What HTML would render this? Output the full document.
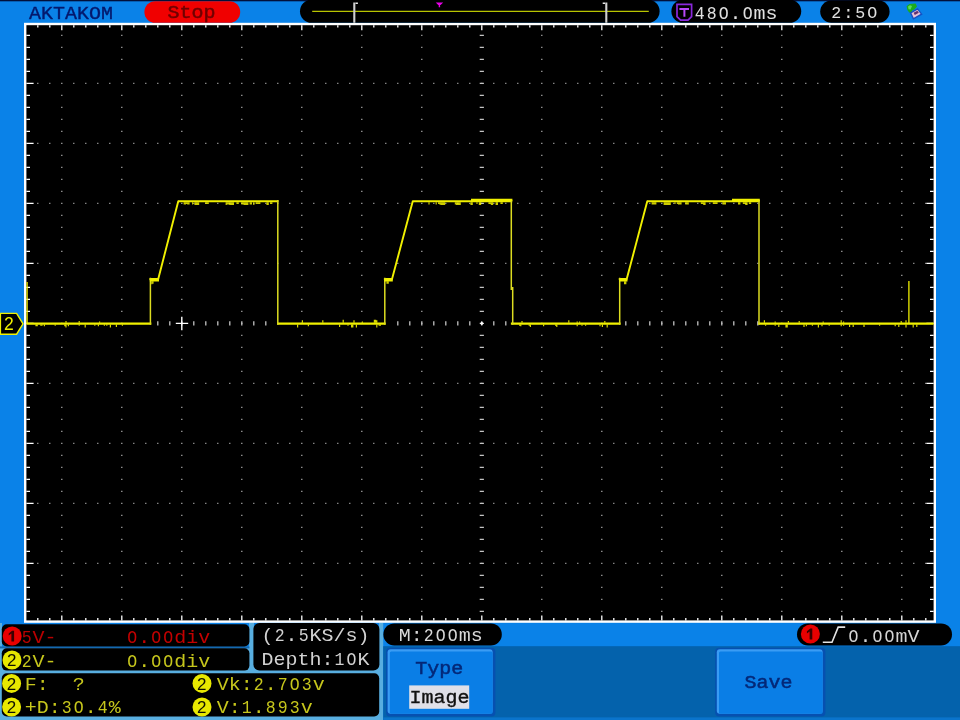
<!DOCTYPE html>
<html><head><meta charset="utf-8"><title>scope</title>
<style>html,body{margin:0;padding:0;background:#0a82e8;overflow:hidden}body{width:960px;height:720px;position:relative;font-family:"Liberation Mono",monospace}</style>
</head><body>
<svg width="960" height="720" viewBox="0 0 960 720" style="position:absolute;left:0;top:0;display:block;filter:blur(0.45px)">
<defs><style>text{font-family:"Liberation Mono",monospace;font-size:18px;white-space:pre}.s{font-family:"Liberation Sans",sans-serif}</style></defs>
<rect x="0" y="0" width="960" height="720" fill="#0a82e8"/>
<rect x="0" y="0" width="960" height="1.3" fill="#02103a"/>
<rect x="24.0" y="22.8" width="912.0" height="600.0" fill="#fff"/>
<rect x="26.4" y="25.2" width="907.2" height="595.1999999999999" fill="#000"/>
<path d="M61.8 34.8V616.4M121.8 34.8V616.4M181.8 34.8V616.4M241.8 34.8V616.4M301.8 34.8V616.4M361.8 34.8V616.4M421.8 34.8V616.4M541.8 34.8V616.4M601.8 34.8V616.4M661.8 34.8V616.4M721.8 34.8V616.4M781.8 34.8V616.4M841.8 34.8V616.4M901.8 34.8V616.4M37.2 83.4H929.6M37.2 143.4H929.6M37.2 203.4H929.6M37.2 263.4H929.6M37.2 383.4H929.6M37.2 443.4H929.6M37.2 503.4H929.6M37.2 563.4H929.6" stroke="#a4a4a4" stroke-width="1.3" stroke-dasharray="1.2 10.8" fill="none"/>
<path d="M479.7 35.4h4.2M479.7 47.4h4.2M479.7 59.4h4.2M479.7 71.4h4.2M479.7 83.4h4.2M479.7 95.4h4.2M479.7 107.4h4.2M479.7 119.4h4.2M479.7 131.4h4.2M479.7 143.4h4.2M479.7 155.4h4.2M479.7 167.4h4.2M479.7 179.4h4.2M479.7 191.4h4.2M479.7 203.4h4.2M479.7 215.4h4.2M479.7 227.4h4.2M479.7 239.4h4.2M479.7 251.4h4.2M479.7 263.4h4.2M479.7 275.4h4.2M479.7 287.4h4.2M479.7 299.4h4.2M479.7 311.4h4.2M479.7 323.4h4.2M479.7 335.4h4.2M479.7 347.4h4.2M479.7 359.4h4.2M479.7 371.4h4.2M479.7 383.4h4.2M479.7 395.4h4.2M479.7 407.4h4.2M479.7 419.4h4.2M479.7 431.4h4.2M479.7 443.4h4.2M479.7 455.4h4.2M479.7 467.4h4.2M479.7 479.4h4.2M479.7 491.4h4.2M479.7 503.4h4.2M479.7 515.4h4.2M479.7 527.4h4.2M479.7 539.4h4.2M479.7 551.4h4.2M479.7 563.4h4.2M479.7 575.4h4.2M479.7 587.4h4.2M479.7 599.4h4.2M479.7 611.4h4.2M157.8 321.3v4.2M169.8 321.3v4.2M181.8 321.3v4.2M193.8 321.3v4.2M205.8 321.3v4.2M217.8 321.3v4.2M229.8 321.3v4.2M241.8 321.3v4.2M253.8 321.3v4.2M265.8 321.3v4.2M397.8 321.3v4.2M409.8 321.3v4.2M421.8 321.3v4.2M433.8 321.3v4.2M445.8 321.3v4.2M457.8 321.3v4.2M469.8 321.3v4.2M481.8 321.3v4.2M493.8 321.3v4.2M505.8 321.3v4.2M625.8 321.3v4.2M637.8 321.3v4.2M649.8 321.3v4.2M661.8 321.3v4.2M673.8 321.3v4.2M685.8 321.3v4.2M697.8 321.3v4.2M709.8 321.3v4.2M721.8 321.3v4.2M733.8 321.3v4.2M745.8 321.3v4.2M757.8 321.3v4.2" stroke="#c4c4c4" stroke-width="1.3" fill="none"/>
<path d="M37.8 25.2v2.4M37.8 620.4v-2.4M49.8 25.2v2.4M49.8 620.4v-2.4M61.8 25.2v5.0M61.8 620.4v-5.0M73.8 25.2v2.4M73.8 620.4v-2.4M85.8 25.2v2.4M85.8 620.4v-2.4M97.8 25.2v2.4M97.8 620.4v-2.4M109.8 25.2v2.4M109.8 620.4v-2.4M121.8 25.2v5.0M121.8 620.4v-5.0M133.8 25.2v2.4M133.8 620.4v-2.4M145.8 25.2v2.4M145.8 620.4v-2.4M157.8 25.2v2.4M157.8 620.4v-2.4M169.8 25.2v2.4M169.8 620.4v-2.4M181.8 25.2v5.0M181.8 620.4v-5.0M193.8 25.2v2.4M193.8 620.4v-2.4M205.8 25.2v2.4M205.8 620.4v-2.4M217.8 25.2v2.4M217.8 620.4v-2.4M229.8 25.2v2.4M229.8 620.4v-2.4M241.8 25.2v5.0M241.8 620.4v-5.0M253.8 25.2v2.4M253.8 620.4v-2.4M265.8 25.2v2.4M265.8 620.4v-2.4M277.8 25.2v2.4M277.8 620.4v-2.4M289.8 25.2v2.4M289.8 620.4v-2.4M301.8 25.2v5.0M301.8 620.4v-5.0M313.8 25.2v2.4M313.8 620.4v-2.4M325.8 25.2v2.4M325.8 620.4v-2.4M337.8 25.2v2.4M337.8 620.4v-2.4M349.8 25.2v2.4M349.8 620.4v-2.4M361.8 25.2v5.0M361.8 620.4v-5.0M373.8 25.2v2.4M373.8 620.4v-2.4M385.8 25.2v2.4M385.8 620.4v-2.4M397.8 25.2v2.4M397.8 620.4v-2.4M409.8 25.2v2.4M409.8 620.4v-2.4M421.8 25.2v5.0M421.8 620.4v-5.0M433.8 25.2v2.4M433.8 620.4v-2.4M445.8 25.2v2.4M445.8 620.4v-2.4M457.8 25.2v2.4M457.8 620.4v-2.4M469.8 25.2v2.4M469.8 620.4v-2.4M481.8 25.2v5.0M481.8 620.4v-5.0M493.8 25.2v2.4M493.8 620.4v-2.4M505.8 25.2v2.4M505.8 620.4v-2.4M517.8 25.2v2.4M517.8 620.4v-2.4M529.8 25.2v2.4M529.8 620.4v-2.4M541.8 25.2v5.0M541.8 620.4v-5.0M553.8 25.2v2.4M553.8 620.4v-2.4M565.8 25.2v2.4M565.8 620.4v-2.4M577.8 25.2v2.4M577.8 620.4v-2.4M589.8 25.2v2.4M589.8 620.4v-2.4M601.8 25.2v5.0M601.8 620.4v-5.0M613.8 25.2v2.4M613.8 620.4v-2.4M625.8 25.2v2.4M625.8 620.4v-2.4M637.8 25.2v2.4M637.8 620.4v-2.4M649.8 25.2v2.4M649.8 620.4v-2.4M661.8 25.2v5.0M661.8 620.4v-5.0M673.8 25.2v2.4M673.8 620.4v-2.4M685.8 25.2v2.4M685.8 620.4v-2.4M697.8 25.2v2.4M697.8 620.4v-2.4M709.8 25.2v2.4M709.8 620.4v-2.4M721.8 25.2v5.0M721.8 620.4v-5.0M733.8 25.2v2.4M733.8 620.4v-2.4M745.8 25.2v2.4M745.8 620.4v-2.4M757.8 25.2v2.4M757.8 620.4v-2.4M769.8 25.2v2.4M769.8 620.4v-2.4M781.8 25.2v5.0M781.8 620.4v-5.0M793.8 25.2v2.4M793.8 620.4v-2.4M805.8 25.2v2.4M805.8 620.4v-2.4M817.8 25.2v2.4M817.8 620.4v-2.4M829.8 25.2v2.4M829.8 620.4v-2.4M841.8 25.2v5.0M841.8 620.4v-5.0M853.8 25.2v2.4M853.8 620.4v-2.4M865.8 25.2v2.4M865.8 620.4v-2.4M877.8 25.2v2.4M877.8 620.4v-2.4M889.8 25.2v2.4M889.8 620.4v-2.4M901.8 25.2v5.0M901.8 620.4v-5.0M913.8 25.2v2.4M913.8 620.4v-2.4M925.8 25.2v2.4M925.8 620.4v-2.4M26.4 35.4h3.6M933.6 35.4h-3.6M26.4 47.4h3.6M933.6 47.4h-3.6M26.4 59.4h3.6M933.6 59.4h-3.6M26.4 71.4h3.6M933.6 71.4h-3.6M26.4 83.4h7.2M933.6 83.4h-7.2M26.4 95.4h3.6M933.6 95.4h-3.6M26.4 107.4h3.6M933.6 107.4h-3.6M26.4 119.4h3.6M933.6 119.4h-3.6M26.4 131.4h3.6M933.6 131.4h-3.6M26.4 143.4h7.2M933.6 143.4h-7.2M26.4 155.4h3.6M933.6 155.4h-3.6M26.4 167.4h3.6M933.6 167.4h-3.6M26.4 179.4h3.6M933.6 179.4h-3.6M26.4 191.4h3.6M933.6 191.4h-3.6M26.4 203.4h7.2M933.6 203.4h-7.2M26.4 215.4h3.6M933.6 215.4h-3.6M26.4 227.4h3.6M933.6 227.4h-3.6M26.4 239.4h3.6M933.6 239.4h-3.6M26.4 251.4h3.6M933.6 251.4h-3.6M26.4 263.4h7.2M933.6 263.4h-7.2M26.4 275.4h3.6M933.6 275.4h-3.6M26.4 287.4h3.6M933.6 287.4h-3.6M26.4 299.4h3.6M933.6 299.4h-3.6M26.4 311.4h3.6M933.6 311.4h-3.6M26.4 323.4h7.2M933.6 323.4h-7.2M26.4 335.4h3.6M933.6 335.4h-3.6M26.4 347.4h3.6M933.6 347.4h-3.6M26.4 359.4h3.6M933.6 359.4h-3.6M26.4 371.4h3.6M933.6 371.4h-3.6M26.4 383.4h7.2M933.6 383.4h-7.2M26.4 395.4h3.6M933.6 395.4h-3.6M26.4 407.4h3.6M933.6 407.4h-3.6M26.4 419.4h3.6M933.6 419.4h-3.6M26.4 431.4h3.6M933.6 431.4h-3.6M26.4 443.4h7.2M933.6 443.4h-7.2M26.4 455.4h3.6M933.6 455.4h-3.6M26.4 467.4h3.6M933.6 467.4h-3.6M26.4 479.4h3.6M933.6 479.4h-3.6M26.4 491.4h3.6M933.6 491.4h-3.6M26.4 503.4h7.2M933.6 503.4h-7.2M26.4 515.4h3.6M933.6 515.4h-3.6M26.4 527.4h3.6M933.6 527.4h-3.6M26.4 539.4h3.6M933.6 539.4h-3.6M26.4 551.4h3.6M933.6 551.4h-3.6M26.4 563.4h7.2M933.6 563.4h-7.2M26.4 575.4h3.6M933.6 575.4h-3.6M26.4 587.4h3.6M933.6 587.4h-3.6M26.4 599.4h3.6M933.6 599.4h-3.6M26.4 611.4h3.6M933.6 611.4h-3.6" stroke="#fff" stroke-width="1.3" fill="none"/>
<path d="M26.4 323.6H151.3M149.5 279.0H158.4M178.0 201.3H278.5M277.1 323.6H385.7M383.90000000000003 279.0H392.2M412.5 201.3H512.3000000000001M510.90000000000003 323.6H620.6M618.8000000000001 279.0H626.9M647.0 201.3H759.7M758.3 323.6H933.6" stroke="#f0f000" stroke-width="2.1" fill="none"/>
<path d="M150.4 324.8V277.8M277.8 200.10000000000002V324.8M384.8 324.8V277.8M511.3 200.10000000000002V290M512.7 287V324.8M619.7 324.8V277.8M759.0 200.10000000000002V324.8" stroke="#dcdc20" stroke-width="1.5" fill="none"/>
<path d="M158.1 279.6L178.4 200.70000000000002M391.9 279.6L412.9 200.70000000000002M626.6 279.6L647.4 200.70000000000002" stroke="#f0f000" stroke-width="1.9" fill="none"/>
<path d="M149.8 280.2H159.0M384.2 280.2H392.8M471.0 199.9H512.4M619.1 280.2H627.5M732.0 199.9H759.8" stroke="#f0f000" stroke-width="2.4" fill="none"/>
<path d="M908.9 281V323.6M27.1 282V323.6" stroke="#f0f000" stroke-width="1.3" fill="none"/>
<path d="M68.4 324.5v1.8M106.8 324.5v1.2M40.8 324.5v1.2M55.2 324.5v1.2M79.2 322.7v-1.8M94.8 324.5v1.2M44.4 324.5v1.8M104.4 324.5v1.2M99.6 322.7v-1.2M36.0 324.5v1.8M79.2 324.5v1.2M66.0 322.7v-1.8M98.4 324.5v1.8M42.0 324.5v1.2M37.2 324.5v1.8M110.4 324.5v3.0M85.2 324.5v3.0M64.8 324.5v1.8M122.4 324.5v1.2M66.0 324.5v3.0M116.4 324.5v2.4M380.4 324.5v1.2M322.8 322.7v-2.4M375.6 322.7v-3.0M379.2 324.5v1.2M339.6 324.5v2.4M351.6 324.5v3.0M362.4 322.7v-1.2M376.8 324.5v3.0M348.0 324.5v1.2M352.8 324.5v3.0M354.0 322.7v-2.4M376.8 322.7v-2.4M343.2 322.7v-3.0M302.4 322.7v-2.4M356.4 324.5v3.0M374.4 322.7v-3.0M297.6 324.5v3.0M308.4 324.5v1.8M602.4 324.5v2.4M556.8 324.5v2.4M604.8 322.7v-1.8M522.0 322.7v-1.8M582.0 324.5v1.2M600.0 324.5v1.8M543.6 324.5v1.8M568.8 322.7v-2.4M585.6 324.5v1.2M607.2 324.5v3.0M555.6 324.5v1.2M579.6 322.7v-1.2M520.8 324.5v1.8M530.4 324.5v2.4M519.6 324.5v1.2M529.2 324.5v1.2M577.2 322.7v-1.2M577.2 324.5v1.8M804.0 324.5v2.4M823.2 322.7v-1.2M906.0 324.5v3.0M843.6 322.7v-1.2M778.8 324.5v2.4M806.4 324.5v1.8M764.4 322.7v-2.4M879.6 324.5v1.2M812.4 324.5v1.2M906.0 322.7v-2.4M822.0 324.5v1.8M853.2 324.5v2.4M799.2 322.7v-1.8M901.2 322.7v-1.8M849.6 324.5v2.4M765.6 324.5v1.2M841.2 324.5v1.8M864.0 324.5v2.4M898.8 324.5v2.4M775.2 322.7v-1.2M841.2 322.7v-2.4M843.6 324.5v1.2M916.8 324.5v2.4M775.2 324.5v1.2M895.2 324.5v1.8M913.2 324.5v3.0M818.4 324.5v3.0M829.2 324.5v1.2M788.4 322.7v-1.8M787.2 324.5v3.0M786.0 324.5v3.0" stroke="#f0f000" stroke-width="1.2" fill="none" opacity="0.9"/>
<path d="M266.4 202.2h2.4v2.9h-2.4zM230.4 202.2h1.2v1.8h-1.2zM253.2 202.2h1.2v2.9h-1.2zM249.6 202.2h2.4v2.4h-2.4zM270.0 202.2h2.4v1.8h-2.4zM183.6 202.2h2.4v2.4h-2.4zM226.8 202.2h4.8v2.4h-4.8zM205.2 202.2h3.6v1.8h-3.6zM187.2 202.2h2.4v2.4h-2.4zM241.2 202.2h4.8v2.4h-4.8zM255.6 202.2h4.8v1.8h-4.8zM229.2 202.2h4.8v2.9h-4.8zM183.6 202.2h3.6v1.8h-3.6zM236.4 202.2h2.4v1.8h-2.4zM194.4 202.2h4.8v2.9h-4.8zM192.0 202.2h1.2v2.4h-1.2zM243.6 202.2h4.8v2.9h-4.8zM225.6 202.2h1.2v2.9h-1.2zM151.2 281.3h2.4v2.4h-2.4zM151.2 281.3h1.2v2.9h-1.2zM456.0 202.2h1.2v1.8h-1.2zM456.0 202.2h4.8v2.9h-4.8zM470.4 202.2h2.4v2.9h-2.4zM440.4 202.2h4.8v2.9h-4.8zM488.4 202.2h4.8v1.8h-4.8zM478.8 202.2h2.4v2.9h-2.4zM495.6 202.2h2.4v2.4h-2.4zM428.4 202.2h1.2v2.4h-1.2zM456.0 202.2h1.2v2.9h-1.2zM438.0 202.2h1.2v1.8h-1.2zM476.4 202.2h1.2v1.8h-1.2zM500.4 202.2h2.4v1.8h-2.4zM439.2 202.2h2.4v2.4h-2.4zM435.6 202.2h1.2v2.4h-1.2zM495.6 202.2h2.4v2.9h-2.4zM490.8 202.2h2.4v2.9h-2.4zM454.8 202.2h4.8v2.4h-4.8zM386.4 281.3h2.4v2.4h-2.4zM386.4 281.3h2.4v1.8h-2.4zM685.2 202.2h3.6v2.4h-3.6zM722.4 202.2h3.6v2.4h-3.6zM703.2 202.2h2.4v2.9h-2.4zM748.8 202.2h1.2v1.8h-1.2zM750.0 202.2h1.2v1.8h-1.2zM678.0 202.2h1.2v1.8h-1.2zM678.0 202.2h2.4v2.4h-2.4zM738.0 202.2h2.4v2.4h-2.4zM666.0 202.2h4.8v2.9h-4.8zM700.8 202.2h2.4v1.8h-2.4zM679.2 202.2h2.4v2.4h-2.4zM742.8 202.2h2.4v1.8h-2.4zM715.2 202.2h2.4v1.8h-2.4zM712.8 202.2h2.4v1.8h-2.4zM678.0 202.2h1.2v2.4h-1.2zM651.6 202.2h4.8v2.4h-4.8zM745.2 202.2h2.4v2.9h-2.4zM663.6 202.2h4.8v2.9h-4.8zM674.4 202.2h1.2v1.8h-1.2zM676.8 202.2h2.4v1.8h-2.4zM624.0 281.3h2.4v2.9h-2.4zM624.0 281.3h2.4v2.4h-2.4z" fill="#f0f000" opacity="0.85"/>
<path d="M175.8 323.4h12.4M181.8 316.79999999999995v13.4" stroke="#fff" stroke-width="1.4" fill="none"/>
<path d="M479.9 323.4L481.8 321.5L483.7 323.4L481.8 325.3Z" fill="#fff"/>
<path d="M0.4 313.4H16.6L23 323.8L16.6 334.2H0.4Z" fill="#000" stroke="#f0f000" stroke-width="1.4"/>
<text class="s" x="3.9" y="330.2" fill="#f0f000" style="font-size:17.5px">2</text>
<text transform="translate(29.00 18.7) scale(1.111 1)" fill="#04186c" stroke="#04186c" stroke-width="0.35">AKTAKOM</text>
<rect x="144.4" y="1.2" width="95.8" height="21.6" rx="10.8" fill="#f00000"/>
<text transform="translate(167.40 17.6) scale(1.111 1)" fill="#700000" stroke="#700000" stroke-width="0.5">Stop</text>
<rect x="300" y="-0.4" width="359.6" height="23.2" rx="11.6" fill="#000"/>
<path d="M312.2 11.3H648.8" stroke="#b8c400" stroke-width="1.25"/>
<path d="M354.3 2.6V22.8M606.3 2.6V22.8" stroke="#d0d0d0" stroke-width="2.1"/>
<path d="M355.5 3.3h2.4M605.1 3.3h-2.4" stroke="#e8e8e8" stroke-width="1.4"/>
<path d="M435.8 2.4h7.4l-2.6 2.6h-0.5v2.2h-1.4v-2.2h-0.5z" fill="#e800e8"/>
<rect x="671.4" y="-0.4" width="129.8" height="23.2" rx="11.6" fill="#000"/>
<path d="M677 4.3H691.6V16.6L688 20.1H680.6L677 16.6Z" fill="#000" stroke="#8a28dc" stroke-width="1.7"/>
<path d="M679.4 9h9.6M684.4 9v7.8" stroke="#b848f8" stroke-width="2" fill="none"/>
<text transform="translate(694.63 19.3) scale(0.92 1)" fill="#e0e0e0">4</text>
<text transform="translate(706.63 19.3) scale(0.92 1)" fill="#e0e0e0">8</text>
<text transform="translate(718.63 19.3) scale(0.92 1)" fill="#e0e0e0">O</text>
<text transform="translate(729.60 19.3) scale(1.111 1)" fill="#e0e0e0">.</text>
<text transform="translate(742.63 19.3) scale(0.92 1)" fill="#e0e0e0">O</text>
<text transform="translate(753.59 19.3) scale(1.111 1)" fill="#e0e0e0">ms</text>
<rect x="820.2" y="0.4" width="69.4" height="22.4" rx="11.2" fill="#000"/>
<text transform="translate(831.30 18.2) scale(0.98 1)" fill="#e0e0e0" style="font-size:17px;letter-spacing:1.8px">2</text>
<text transform="translate(843.20 18.2) scale(1.0 1)" fill="#e0e0e0" style="font-size:17px;letter-spacing:1.8px">:</text>
<text transform="translate(855.30 18.2) scale(0.98 1)" fill="#e0e0e0" style="font-size:17px;letter-spacing:1.8px">5</text>
<text transform="translate(867.30 18.2) scale(0.98 1)" fill="#e0e0e0" style="font-size:17px;letter-spacing:1.8px">O</text>
<path d="M906.6 6.2L909.4 4L915.6 3.6L917 6.6L914.6 9.2L912.2 10.4L911.2 13.2L909.2 12.6L907.4 10Z" fill="#1cac1c"/>
<path d="M908 6.6L910 5.2L912 6L910.6 9.4L908.6 9.2Z" fill="#5cdc5c"/>
<path d="M910.6 12.8L917.6 8.8L921.6 14.2L913.4 18.8Z" fill="#e4c0d4" stroke="#1450c4" stroke-width="1.4"/>
<path d="M913.6 12.8L917.4 10.8L918.8 12.8L914.8 15Z" fill="#603070"/>
<rect x="0" y="646.8" width="383" height="73.2" fill="#58aee0"/>
<rect x="0" y="623" width="2" height="97" fill="#58aee0"/>
<rect x="249" y="623" width="5" height="49" fill="#58aee0"/>
<rect x="379" y="623" width="4.2" height="97" fill="#58aee0"/>
<rect x="0" y="646.4" width="249.4" height="2" fill="#1468b0"/>
<rect x="383.2" y="646.2" width="576.8" height="73.8" fill="#0462ac"/>
<rect x="383.2" y="717.4" width="576.8" height="2.6" fill="#0a74cc"/>
<rect x="1.8" y="624.3" width="247.6" height="22.2" rx="5" fill="#000"/>
<rect x="1.8" y="648.3" width="247.6" height="22.3" rx="5" fill="#000"/>
<rect x="1.8" y="673.2" width="377.4" height="43.2" rx="5" fill="#000"/>
<rect x="253.4" y="623" width="126" height="47.4" rx="6" fill="#000"/>
<circle cx="12.2" cy="636.0" r="9.5" fill="#e80000"/>
<path d="M14.1 630.8H12.1L8.7 633.4V635.6L11.4 633.6V641.6H14.1Z" fill="#3c0000"/>
<circle cx="12.0" cy="660.0" r="9.5" fill="#e8e800"/>
<text class="s" x="7.1" y="666.1" fill="#101000" style="font-size:17px">2</text>
<text transform="translate(21.63 643.4) scale(0.92 1)" fill="#b80000">5</text>
<text transform="translate(32.60 643.4) scale(1.111 1)" fill="#b80000">V-</text>
<text transform="translate(127.23 643.4) scale(0.92 1)" fill="#c40000">O</text>
<text transform="translate(138.20 643.4) scale(1.111 1)" fill="#c40000">.</text>
<text transform="translate(151.23 643.4) scale(0.92 1)" fill="#c40000">O</text>
<text transform="translate(163.23 643.4) scale(0.92 1)" fill="#c40000">O</text>
<text transform="translate(174.20 643.4) scale(1.111 1)" fill="#c40000">div</text>
<text transform="translate(21.63 667.2) scale(0.92 1)" fill="#c6c61c">2</text>
<text transform="translate(32.60 667.2) scale(1.111 1)" fill="#c6c61c">V-</text>
<text transform="translate(127.23 667.2) scale(0.92 1)" fill="#c6c61c">O</text>
<text transform="translate(138.20 667.2) scale(1.111 1)" fill="#c6c61c">.</text>
<text transform="translate(151.23 667.2) scale(0.92 1)" fill="#c6c61c">O</text>
<text transform="translate(163.23 667.2) scale(0.92 1)" fill="#c6c61c">O</text>
<text transform="translate(174.20 667.2) scale(1.111 1)" fill="#c6c61c">div</text>
<text transform="translate(261.60 641.4) scale(1.111 1)" fill="#d2d2d2">(</text>
<text transform="translate(274.63 641.4) scale(0.92 1)" fill="#d2d2d2">2</text>
<text transform="translate(285.60 641.4) scale(1.111 1)" fill="#d2d2d2">.</text>
<text transform="translate(298.63 641.4) scale(0.92 1)" fill="#d2d2d2">5</text>
<text transform="translate(309.60 641.4) scale(1.111 1)" fill="#d2d2d2">KS/s)</text>
<text transform="translate(261.60 664.6) scale(1.111 1)" fill="#d2d2d2">Depth:</text>
<text transform="translate(334.62 664.6) scale(0.92 1)" fill="#d2d2d2">1</text>
<text transform="translate(346.62 664.6) scale(0.92 1)" fill="#d2d2d2">O</text>
<text transform="translate(357.59 664.6) scale(1.111 1)" fill="#d2d2d2">K</text>
<circle cx="11.6" cy="683.4" r="9.5" fill="#e8e800"/>
<text class="s" x="6.699999999999999" y="689.5" fill="#101000" style="font-size:17px">2</text>
<circle cx="11.6" cy="707.0" r="9.5" fill="#e8e800"/>
<text class="s" x="6.699999999999999" y="713.1" fill="#101000" style="font-size:17px">2</text>
<circle cx="202.0" cy="683.4" r="9.5" fill="#e8e800"/>
<text class="s" x="197.1" y="689.5" fill="#101000" style="font-size:17px">2</text>
<circle cx="202.0" cy="707.0" r="9.5" fill="#e8e800"/>
<text class="s" x="197.1" y="713.1" fill="#101000" style="font-size:17px">2</text>
<text transform="translate(24.80 689.8) scale(1.111 1)" fill="#c6c61c">F:  ?</text>
<text transform="translate(24.80 712.6) scale(1.111 1)" fill="#c6c61c">+D:</text>
<text transform="translate(61.83 712.6) scale(0.92 1)" fill="#c6c61c">3</text>
<text transform="translate(73.83 712.6) scale(0.92 1)" fill="#c6c61c">O</text>
<text transform="translate(84.79 712.6) scale(1.111 1)" fill="#c6c61c">.</text>
<text transform="translate(97.82 712.6) scale(0.92 1)" fill="#c6c61c">4</text>
<text transform="translate(108.79 712.6) scale(1.111 1)" fill="#c6c61c">%</text>
<text transform="translate(216.80 689.8) scale(1.111 1)" fill="#c6c61c">Vk:</text>
<text transform="translate(253.83 689.8) scale(0.92 1)" fill="#c6c61c">2</text>
<text transform="translate(264.80 689.8) scale(1.111 1)" fill="#c6c61c">.</text>
<text transform="translate(277.83 689.8) scale(0.92 1)" fill="#c6c61c">7</text>
<text transform="translate(289.82 689.8) scale(0.92 1)" fill="#c6c61c">O</text>
<text transform="translate(301.82 689.8) scale(0.92 1)" fill="#c6c61c">3</text>
<text transform="translate(312.79 689.8) scale(1.111 1)" fill="#c6c61c">v</text>
<text transform="translate(216.80 712.6) scale(1.111 1)" fill="#c6c61c">V:</text>
<text transform="translate(241.83 712.6) scale(0.92 1)" fill="#c6c61c">1</text>
<text transform="translate(252.80 712.6) scale(1.111 1)" fill="#c6c61c">.</text>
<text transform="translate(265.83 712.6) scale(0.92 1)" fill="#c6c61c">8</text>
<text transform="translate(277.83 712.6) scale(0.92 1)" fill="#c6c61c">9</text>
<text transform="translate(289.82 712.6) scale(0.92 1)" fill="#c6c61c">3</text>
<text transform="translate(300.79 712.6) scale(1.111 1)" fill="#c6c61c">v</text>
<rect x="383.4" y="623.4" width="118.4" height="22" rx="11" fill="#000"/>
<text transform="translate(398.80 641.2) scale(1.111 1)" fill="#d8d8d8">M:</text>
<text transform="translate(423.83 641.2) scale(0.92 1)" fill="#d8d8d8">2</text>
<text transform="translate(435.83 641.2) scale(0.92 1)" fill="#d8d8d8">O</text>
<text transform="translate(447.83 641.2) scale(0.92 1)" fill="#d8d8d8">O</text>
<text transform="translate(458.79 641.2) scale(1.111 1)" fill="#d8d8d8">ms</text>
<rect x="797" y="623.4" width="155" height="22" rx="11" fill="#000"/>
<circle cx="810.4" cy="634.0" r="9.5" fill="#e80000"/>
<path d="M812.3 628.6H810.3L806.9 631.2V633.4L809.6 631.4V639.4H812.3Z" fill="#3c0000"/>
<path d="M822.8 642.2H832L838.2 627.1H845.2" stroke="#e4e4e4" stroke-width="1.6" fill="none"/>
<text transform="translate(848.43 642.3) scale(0.92 1)" fill="#d4d4d4">O</text>
<text transform="translate(859.40 642.3) scale(1.111 1)" fill="#d4d4d4">.</text>
<text transform="translate(872.43 642.3) scale(0.92 1)" fill="#d4d4d4">O</text>
<text transform="translate(884.43 642.3) scale(0.92 1)" fill="#d4d4d4">O</text>
<text transform="translate(895.40 642.3) scale(1.111 1)" fill="#d4d4d4">mV</text>
<rect x="386.0" y="647.8000000000001" width="109.39999999999995" height="68.8" rx="4" fill="#0650b0"/>
<rect x="387.6" y="649.2" width="104.99999999999996" height="64.6" rx="3" fill="#3a9cf4"/>
<rect x="389.8" y="651.6" width="102.79999999999995" height="62.2" rx="1.5" fill="#0a7ee6"/>
<rect x="715.1999999999999" y="647.8000000000001" width="110.20000000000002" height="68.8" rx="4" fill="#0650b0"/>
<rect x="716.8" y="649.2" width="105.80000000000003" height="64.6" rx="3" fill="#3a9cf4"/>
<rect x="719.0" y="651.6" width="103.60000000000002" height="62.2" rx="1.5" fill="#0a7ee6"/>
<text transform="translate(415.20 674.2) scale(1.111 1)" fill="#042878" stroke="#042878" stroke-width="0.5">Type</text>
<rect x="409.2" y="685.4" width="60" height="23.4" fill="#e0e0e8"/>
<text transform="translate(409.60 702.6) scale(1.111 1)" fill="#101010" stroke="#101010" stroke-width="0.35">Image</text>
<text transform="translate(744.40 688.4) scale(1.111 1)" fill="#042878" stroke="#042878" stroke-width="0.5">Save</text>
</svg>
</body></html>
